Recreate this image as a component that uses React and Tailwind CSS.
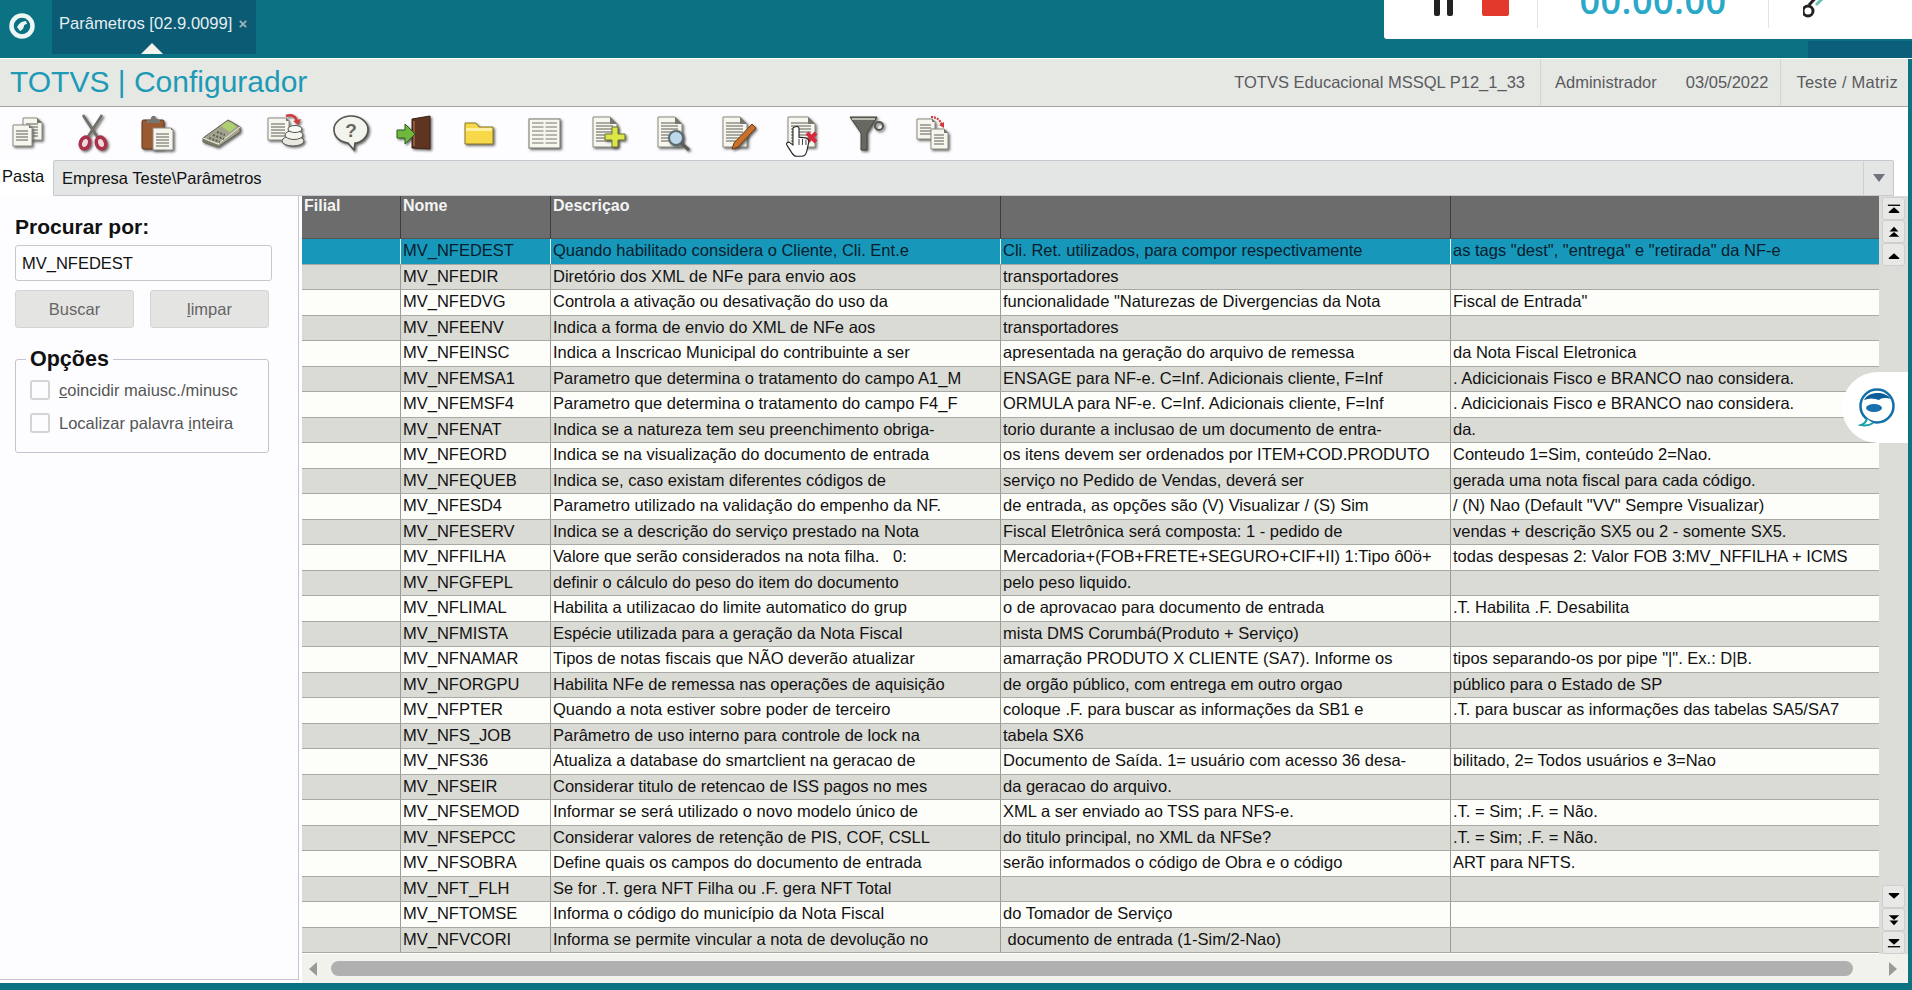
import React from "react";

const rows = [
  ["MV_NFEDEST", "Quando habilitado considera o Cliente, Cli. Ent.e", "Cli. Ret. utilizados, para compor respectivamente", 'as tags "dest", "entrega" e "retirada" da NF-e'],
  ["MV_NFEDIR", "Diretório dos XML de NFe para envio aos", "transportadores", ""],
  ["MV_NFEDVG", "Controla a ativação ou desativação do uso da", 'funcionalidade "Naturezas de Divergencias da Nota', 'Fiscal de Entrada"'],
  ["MV_NFEENV", "Indica a forma de envio do XML de NFe aos", "transportadores", ""],
  ["MV_NFEINSC", "Indica a Inscricao Municipal do contribuinte a ser", "apresentada na geração do arquivo de remessa", "da Nota Fiscal Eletronica"],
  ["MV_NFEMSA1", "Parametro que determina o tratamento do campo A1_M", "ENSAGE para NF-e. C=Inf. Adicionais cliente, F=Inf", ". Adicicionais Fisco e BRANCO nao considera."],
  ["MV_NFEMSF4", "Parametro que determina o tratamento do campo F4_F", "ORMULA para NF-e. C=Inf. Adicionais cliente, F=Inf", ". Adicicionais Fisco e BRANCO nao considera."],
  ["MV_NFENAT", "Indica se a natureza tem seu preenchimento obriga-", "torio durante a inclusao de um documento de entra-", "da."],
  ["MV_NFEORD", "Indica se na visualização do documento de entrada", "os itens devem ser ordenados por ITEM+COD.PRODUTO", "Conteudo 1=Sim, conteúdo 2=Nao."],
  ["MV_NFEQUEB", "Indica se, caso existam diferentes códigos de", "serviço no Pedido de Vendas, deverá ser", "gerada uma nota fiscal para cada código."],
  ["MV_NFESD4", "Parametro utilizado na validação do empenho da NF.", "de entrada, as opções são (V) Visualizar / (S) Sim", '/ (N) Nao (Default "VV" Sempre Visualizar)'],
  ["MV_NFESERV", "Indica se a descrição do serviço prestado na Nota", "Fiscal Eletrônica será composta: 1 - pedido de", "vendas + descrição SX5 ou 2 - somente SX5."],
  ["MV_NFFILHA", "Valore que serão considerados na nota filha.   0:", "Mercadoria+(FOB+FRETE+SEGURO+CIF+II) 1:Tipo ô0ö+", "todas despesas 2: Valor FOB 3:MV_NFFILHA + ICMS"],
  ["MV_NFGFEPL", "definir o cálculo do peso do item do documento", "pelo peso liquido.", ""],
  ["MV_NFLIMAL", "Habilita a utilizacao do limite automatico do grup", "o de aprovacao para documento de entrada", ".T. Habilita .F. Desabilita"],
  ["MV_NFMISTA", "Espécie utilizada para a geração da Nota Fiscal", "mista DMS Corumbá(Produto + Serviço)", ""],
  ["MV_NFNAMAR", "Tipos de notas fiscais que NÃO deverão atualizar", "amarração PRODUTO X CLIENTE (SA7). Informe os", 'tipos separando-os por pipe "|". Ex.: D|B.'],
  ["MV_NFORGPU", "Habilita NFe de remessa nas operações de aquisição", "de orgão público, com entrega em outro orgao", "público para o Estado de SP"],
  ["MV_NFPTER", "Quando a nota estiver sobre poder de terceiro", "coloque .F. para buscar as informações da SB1 e", ".T. para buscar as informações das tabelas SA5/SA7"],
  ["MV_NFS_JOB", "Parâmetro de uso interno para controle de lock na", "tabela SX6", ""],
  ["MV_NFS36", "Atualiza a database do smartclient na geracao de", "Documento de Saída. 1= usuário com acesso 36 desa-", "bilitado, 2= Todos usuários e 3=Nao"],
  ["MV_NFSEIR", "Considerar titulo de retencao de ISS pagos no mes", "da geracao do arquivo.", ""],
  ["MV_NFSEMOD", "Informar se será utilizado o novo modelo único de", "XML a ser enviado ao TSS para NFS-e.", ".T. = Sim; .F. = Não."],
  ["MV_NFSEPCC", "Considerar valores de retenção de PIS, COF, CSLL", "do titulo principal, no XML da NFSe?", ".T. = Sim; .F. = Não."],
  ["MV_NFSOBRA", "Define quais os campos do documento de entrada", "serão informados o código de Obra e o código", "ART para NFTS."],
  ["MV_NFT_FLH", "Se for .T. gera NFT Filha ou .F. gera NFT Total", "", ""],
  ["MV_NFTOMSE", "Informa o código do município da Nota Fiscal", "do Tomador de Serviço", ""],
  ["MV_NFVCORI", "Informa se permite vincular a nota de devolução no", " documento de entrada (1-Sim/2-Nao)", ""],
];

const Shadow = () => (
  <filter id="sh" x="-20%" y="-20%" width="150%" height="150%">
    <feDropShadow dx="1.5" dy="1.5" stdDeviation="0.8" floodColor="#444" floodOpacity="0.8" />
  </filter>
);

// a sheet of paper with text lines, shared by most of the toolbar icons
const Page = ({ x = 6, y = 3, w = 24, h = 32, fold = 7 }) => {
  const lines = [];
  for (let i = y + 6; i < y + h - 3; i += 3) lines.push(i);
  return (
    <g filter="url(#sh)">
      <path d={`M${x} ${y}h${w - fold}l${fold} ${fold}v${h - fold}h-${w}z`} fill="#f6f6ee" stroke="#8a8a80" strokeWidth="1" />
      <path d={`M${x + w - fold} ${y}v${fold}h${fold}z`} fill="#77776f" />
      {lines.map((l) => (
        <path key={l} d={`M${x + 3} ${l}h${w - 7}`} stroke="#77776f" strokeWidth="1.2" />
      ))}
    </g>
  );
};

const Icon = ({ children }) => (
  <svg width="44" height="44" viewBox="0 0 44 44" className="shrink-0">
    {children}
  </svg>
);

const toolbar = [
  // copy
  <Icon key="copy"><Page x={17} y={6} w={19} h={22} fold={5} /><Page x={7} y={13} w={19} h={21} fold={3} /></Icon>,
  // scissors
  <Icon key="cut">
    <g filter="url(#sh)">
      <path d="M12 3l15 23M31 3L16 26" stroke="#6f6f68" strokeWidth="2.6" />
      <ellipse cx="14" cy="31" rx="4.5" ry="6" fill="#f0d8dc" stroke="#a8324a" strokeWidth="3.6" transform="rotate(20 14 31)" />
      <ellipse cx="30" cy="31" rx="4.5" ry="6" fill="#f0d8dc" stroke="#a8324a" strokeWidth="3.6" transform="rotate(-20 30 31)" />
    </g>
  </Icon>,
  // paste
  <Icon key="paste">
    <g filter="url(#sh)">
      <rect x="7" y="8" width="22" height="29" rx="1.5" fill="#9c5a32" stroke="#5c3418" />
      <path d="M12 8h3l2-4h3l2 4h3v3H12z" fill="#77776f" />
    </g>
    <Page x={18} y={16} w={20} h={22} fold={2} />
  </Icon>,
  // calculator
  <Icon key="calc">
    <g filter="url(#sh)">
      <path d="M3 26L28 8l12 7v5L18 35 3 30z" fill="#a3a38e" stroke="#5e5e50" />
      <path d="M3 26l15 6 22-17" fill="none" stroke="#efeee0" strokeWidth="1" />
      <path d="M3 27l15 6v2L3 30z" fill="#77776a" />
      <path d="M26 10c4-1 8 2 10 5l-6 5-9-6z" fill="#afd070" />
      <path d="M9 26l11 4M13 23l11 4M17 20l8 3" stroke="#5f5f54" strokeWidth="2" strokeDasharray="2 1.5" />
    </g>
  </Icon>,
  // copy to database
  <Icon key="dbcopy">
    <Page x={4} y={6} w={21} h={22} fold={3} />
    <g filter="url(#sh)">
      <ellipse cx="29" cy="29" rx="11" ry="5" fill="#e8e8e0" stroke="#555" />
      <ellipse cx="30" cy="23" rx="9" ry="4.5" fill="#f4f4ec" stroke="#555" />
      <ellipse cx="31" cy="17" rx="7" ry="3.5" fill="#fafaf4" stroke="#555" />
      <path d="M22 4c6-2 10 0 11 6" fill="none" stroke="#d03a3a" strokeWidth="2.4" />
      <path d="M29 9l5 4 3-6z" fill="#d03a3a" />
    </g>
  </Icon>,
  // help bubble
  <Icon key="help">
    <g filter="url(#sh)">
      <path d="M22 4c9 0 17 6 17 13.5S32 31 26 31l-1 7-6-7C11 30 5 25 5 17.5S13 4 22 4z" fill="#f4f4ee" stroke="#55554f" strokeWidth="1.6" />
    </g>
    <text x="22" y="25" textAnchor="middle" fontFamily="Liberation Sans" fontWeight="700" fontSize="19" fill="#66665e">?</text>
  </Icon>,
  // exit door
  <Icon key="exit">
    <g filter="url(#sh)">
      <path d="M18 7l18-3v33l-18-1z" fill="#5f3524" stroke="#3e2010" />
      <path d="M20 9v25" stroke="#8d5a3e" strokeWidth="2" />
      <path d="M3 18h8v-6l10 10-10 10v-6H3z" fill="#6fb83c" stroke="#2f5f20" />
    </g>
  </Icon>,
  // folder
  <Icon key="folder">
    <g filter="url(#sh)">
      <path d="M7 11h11l3 4h14v17H7z" fill="#f7d84a" stroke="#8a7628" />
      <path d="M8 16h26v3H8z" fill="#fff0a0" />
    </g>
  </Icon>,
  // table
  <Icon key="table">
    <g filter="url(#sh)">
      <rect x="6" y="7" width="31" height="29" fill="#f6f6ee" stroke="#77776f" />
      <path d="M9 11h25M9 15h25M9 19h25M9 23h25M9 27h25M9 31h25" stroke="#77776f" strokeWidth="1.2" />
      <path d="M21.5 8v27" stroke="#f6f6ee" strokeWidth="2" />
    </g>
  </Icon>,
  // new page
  <Icon key="add">
    <Page x={6} y={5} w={24} h={30} />
    <g filter="url(#sh)">
      <path d="M25 15h6v7h7v6h-7v7h-6v-7h-7v-6h7z" fill="#dde64a" stroke="#6a7030" />
    </g>
  </Icon>,
  // search page
  <Icon key="view">
    <Page x={6} y={5} w={24} h={30} />
    <g filter="url(#sh)">
      <circle cx="24" cy="26" r="7" fill="#bcd8ea" stroke="#5c6a70" strokeWidth="2" />
      <path d="M29 31l8 7" stroke="#5c5c58" strokeWidth="3" />
    </g>
  </Icon>,
  // edit page
  <Icon key="edit">
    <Page x={6} y={5} w={24} h={30} />
    <g filter="url(#sh)">
      <path d="M35 12l4 4-18 19-6 2 2-6z" fill="#c9702a" stroke="#6e3c16" />
    </g>
  </Icon>,
  // delete page
  <Icon key="del">
    <Page x={7} y={5} w={27} h={30} />
    <path d="M26 21l9 9M35 21l-9 9" stroke="#d8283c" strokeWidth="4" />
  </Icon>,
  // funnel
  <Icon key="filter">
    <g filter="url(#sh)">
      <path d="M4 5h27L21 21v17h-6V21z" fill="#686862" stroke="#44443f" />
      <path d="M6 6h23v2H6z" fill="#bdbdb4" />
      <circle cx="33" cy="14" r="4" fill="none" stroke="#55554f" strokeWidth="2" />
    </g>
  </Icon>,
  // transfer pages
  <Icon key="move">
    <Page x={7} y={7} w={18} h={20} fold={3} />
    <Page x={21} y={17} w={17} h={20} fold={4} />
    <path d="M21 5c6 0 9 3 11 8" fill="none" stroke="#d03a3a" strokeWidth="2.2" strokeDasharray="2 1" />
    <path d="M29 13l5 3 0-6z" fill="#d03a3a" />
  </Icon>,
];

// one of the small scroll buttons beside the grid
const ScrollButton = ({ top, double, down }) => (
  <div className="w-[23px] h-[23px] rounded-[3px] border border-[#cfcfcf] bg-[#e8e8e6] flex items-center justify-center">
    <svg width="14" height="14" viewBox="0 0 16 16">
      <g transform={down ? "rotate(180 8 8)" : undefined}>
        {top && <path d="M1 3h14v1.5H1z" />}
        {!double && <path d="M8 6l6 5.5v1H2v-1z" />}
        {double && <path d="M8 2l5 5.5H3zM8 8l6 5.5H2z" />}
      </g>
    </svg>
  </div>
);

const Row = ({ row, index }) => {
  const selected = index === 0;
  const bg = selected ? "bg-[#1798bb]" : index % 2 === 1 ? "bg-[#dbdbd6]" : "bg-[#fdfdfa]";
  const line = selected ? "border-[#e8f4f8]" : "border-[#9a9a96]";
  return (
    <div className={`grid grid-cols-[98px_150px_450px_450px_1fr] h-[25.5px] items-stretch border-b border-[#a8a8a4] ${bg} ${selected ? "text-[#071c2c]" : "text-[#111]"}`}>
      <div />
      {row.map((cell, i) => (
        <div key={i} className={`border-l ${line} pl-[2px] leading-[23px] whitespace-pre overflow-hidden`}>
          {cell}
        </div>
      ))}
    </div>
  );
};

export default function App() {
  return (
    <div className="w-[1912px] h-[990px] overflow-hidden relative bg-[#0d7383] font-['Liberation_Sans',Arial,sans-serif] flex flex-col">
      <svg width="0" height="0" className="absolute"><defs><Shadow /></defs></svg>

      {/* top teal bar */}
      <div className="h-[59px] shrink-0 flex items-stretch bg-[#0b7284] border-b border-white">
        <div className="w-[50px] flex items-center justify-center pb-[6px] pr-[6px]">
          <svg width="28" height="28" viewBox="0 0 28 28">
            <circle cx="14" cy="14" r="10.5" fill="none" stroke="#eef6f4" strokeWidth="4.5" />
            <path d="M9 15c2-4 5-6 9-6l1 3c-2 0-3 1-3 2s-1 4-4 5z" fill="#eef6f4" />
          </svg>
        </div>
        <div className="relative ml-[2px] w-[204px] h-[54px] bg-[#0b5b74] flex items-center gap-[6px] pl-[7px] pb-[5px] text-[16.6px] text-[#e3eef1]">
          <span>Parâmetros [02.9.0099]</span>
          <span className="text-[#9fb6bd] text-[15px] font-bold">×</span>
          <div className="absolute left-[89px] bottom-0 w-0 h-0 border-l-[11px] border-r-[11px] border-b-[11px] border-l-transparent border-r-transparent border-b-[#f4f4ee]" />
        </div>
        <div className="flex-1" />
        <div className="w-[104px] self-end h-[17px] bg-[#0b5f78]" />
      </div>

      <div className="flex-1 min-h-0 flex flex-col bg-white mr-[4px] ">
        {/* title band */}
        <div className="h-[48px] shrink-0 flex items-center bg-[#e6e8e4] border-b border-[#a4a6a4] pl-[10px] pr-[10px]">
          <span className="text-[30px] text-[#1c9ab6] leading-none -mt-[2px]">TOTVS | Configurador</span>
          <div className="flex-1" />
          <div className="flex items-center text-[16.5px] text-[#5a5a5e] h-full">
            <span className="pr-[15px] border-r border-[#d4d4d0] h-full flex items-center">TOTVS Educacional MSSQL P12_1_33</span>
            <span className="pl-[14px] pr-[29px]">Administrador</span>
            <span className="pr-[12px] border-r border-[#d4d4d0] h-full flex items-center">03/05/2022</span>
            <span className="pl-[15px] tracking-[0.25px]">Teste / Matriz</span>
          </div>
        </div>

        {/* toolbar */}
        <div className="h-[53px] shrink-0 flex items-center gap-[20.6px] pl-[6px] bg-[#fdfdff]">{toolbar}</div>

        {/* folder row */}
        <div className="h-[36px] shrink-0 flex items-stretch">
          <div className="w-[53px] pl-[2px] pt-[4px] text-[16.5px] text-[#111] bg-white">Pasta</div>
          <div className="flex-1 mr-[14px] flex items-center justify-between bg-[#e4e6e6] border border-[#c8c8d0] rounded-t-[2px] pl-[8px] text-[16.5px] text-[#111]">
            <span>Empresa Teste\Parâmetros</span>
            <div className="w-[30px] h-full border-l border-[#d0d0d0] flex items-center justify-center">
              <div className="w-0 h-0 border-l-[6px] border-r-[6px] border-t-[8px] border-l-transparent border-r-transparent border-t-[#72727c]" />
            </div>
          </div>
        </div>

        <div className="flex-1 min-h-0 flex">
          {/* left search panel */}
          <div className="w-[299px] h-[784px] shrink-0 border-r border-b border-[#c4c4d4] bg-[#fdfdff] pl-[15px] pt-[20px]">
            <div className="font-bold text-[21px] leading-[22px] text-[#111]">Procurar por:</div>
            <div className="mt-[7px] w-[257px] h-[36px] border border-[#c8c8c8] rounded-[3px] pl-[6px] flex items-center text-[16.5px] text-[#111]">MV_NFEDEST</div>
            <div className="mt-[9px] flex gap-[16px]">
              <div className="w-[119px] h-[38px] bg-[#e4e4e2] border border-[#d4d4d4] rounded-[3px] flex items-center justify-center text-[16.5px] text-[#666]">Buscar</div>
              <div className="w-[119px] h-[38px] bg-[#e4e4e2] border border-[#d4d4d4] rounded-[3px] flex items-center justify-center text-[16.5px] text-[#666]"><span><u>l</u>impar</span></div>
            </div>
            <fieldset className="mt-[20px] w-[254px] h-[105px] border border-[#c4c4d0] rounded-[3px] pl-[14px] pr-0 m-0">
              <legend className="font-bold text-[21.5px] leading-[22px] px-[4px] -ml-[4px] text-[#111]">Opções</legend>
              <label className="flex items-center gap-[9px] mt-[8px] text-[16.5px] text-[#555]">
                <span className="w-[20px] h-[20px] border-2 border-[#d4d4d4] rounded-[3px] shrink-0" />
                <span><u>c</u>oincidir maiusc./minusc</span>
              </label>
              <label className="flex items-center gap-[9px] mt-[8px] text-[16.5px] text-[#555]">
                <span className="w-[20px] h-[20px] border-2 border-[#d4d4d4] rounded-[3px] shrink-0" />
                <span>Localizar palavra <u>i</u>nteira</span>
              </label>
            </fieldset>
          </div>

          {/* grid */}
          <div className="flex-1 min-w-0 flex flex-col pl-[3px] text-[16.5px]">
            <div className="flex flex-1 min-h-0">
              <div className="w-[1577px] shrink-0">
                <div className="grid grid-cols-[98px_150px_450px_450px_1fr] h-[43px] bg-[#6c6c6c] text-[#f4f4f4] font-bold text-[16px] border-b border-[#555]">
                  {["Filial", "Nome", "Descriçao", "", ""].map((h, i) => (
                    <div key={i} className={`pl-[2px] leading-[20px] ${i > 0 ? "border-l border-[#3c3c3c]" : ""}`}>{h}</div>
                  ))}
                </div>
                {rows.map((r, i) => (
                  <Row key={r[0]} row={r} index={i} />
                ))}
              </div>
              <div className="flex-1 bg-[#dcdcd8] flex flex-col justify-between items-center pt-[1px] pb-0 w-[29px]">
                <div className="flex flex-col">
                  <ScrollButton top />
                  <ScrollButton double />
                  <ScrollButton />
                </div>
                <div className="flex flex-col">
                  <ScrollButton down />
                  <ScrollButton double down />
                  <ScrollButton top down />
                </div>
              </div>
            </div>
            {/* horizontal scrollbar */}
            <div className="h-[29px] shrink-0 flex items-center bg-[#f2f2ec] pl-[7px] pr-[11px] gap-[14px]">
              <div className="w-0 h-0 border-y-[7px] border-r-[8px] border-y-transparent border-r-[#9a9a98]" />
              <div className="flex-1 h-[15px] rounded-full bg-[#b0b0b0]" />
              <div className="w-0 h-0 border-y-[7px] border-l-[8px] border-y-transparent border-l-[#9a9a98] ml-[22px]" />
            </div>
          </div>
        </div>
      </div>

      {/* bottom window edge */}
      <div className="h-[7px] shrink-0 bg-[#0b7284]" />

      {/* screen recorder panel, over the app */}
      <div className="absolute top-0 right-0 w-[528px] h-[39px] bg-white rounded-bl-[3px] flex items-start text-[#29a8c8] overflow-hidden">
        <div className="w-[154px] h-[28px] flex items-start pl-[50px] gap-[29px] border-r border-[#e4e4e4]">
          <div className="flex gap-[7px]"><div className="w-[6px] h-[16px] bg-[#222] rounded-b-[2px]" /><div className="w-[6px] h-[16px] bg-[#222] rounded-b-[2px]" /></div>
          <div className="w-[27px] h-[16px] bg-[#e2392c] rounded-b-[2px]" />
        </div>
        <div className="w-[231px] h-[28px] border-r border-[#e4e4e4] flex justify-center">
          <span className="text-[36px] leading-none -mt-[17px] font-semibold font-['Open_Sans','Liberation_Sans',sans-serif] tracking-[0.5px]">00:00:00</span>
        </div>
        <svg width="30" height="18" viewBox="0 0 30 18" className="ml-[34px]">
          <path d="M18 -8L6 5" stroke="#222" strokeWidth="3" />
          <circle cx="5" cy="11" r="5" fill="none" stroke="#222" strokeWidth="3" />
          <path d="M22 -4l-9 9" stroke="#6cc0b0" strokeWidth="3" />
        </svg>
      </div>

      {/* chat button floating on the right */}
      <div className="absolute left-[1842px] top-[372px] w-[66px] h-[71px] rounded-l-[36px] bg-white flex items-center justify-center pl-[4px]">
        <svg width="38" height="40" viewBox="0 0 38 40">
          <circle cx="19" cy="18" r="16.5" fill="#fff" stroke="#1270a8" strokeWidth="2.5" />
          <path d="M6 12c4-8 20-10 27-1-6-2-10-1-12 1-5-2-10-2-15 0z" fill="#0f5c9a" />
          <ellipse cx="16" cy="20" rx="8" ry="4" fill="#1a6fae" />
          <path d="M9 31c-1 3-3 5-6 6 5 1 9 0 12-2" fill="#fff" stroke="#17a0a8" strokeWidth="2" />
        </svg>
      </div>

      {/* mouse pointer over the toolbar */}
      <svg width="26" height="33" viewBox="0 0 30 38" className="absolute left-[786px] top-[125px]">
        <path d="M11 2c2-1 4 0 4 2v10l8 1c3 1 4 3 3 6l-2 9c-1 4-2 6-6 6H12c-3 0-4-2-6-5l-5-8c-1-2 1-4 3-3l4 3V4c0-1 2-2 3-2z" fill="#fff" stroke="#222" strokeWidth="1.3" />
        <path d="M15 16v7M19 16v7M23 17v6" stroke="#222" strokeWidth="1" />
      </svg>
    </div>
  );
}
